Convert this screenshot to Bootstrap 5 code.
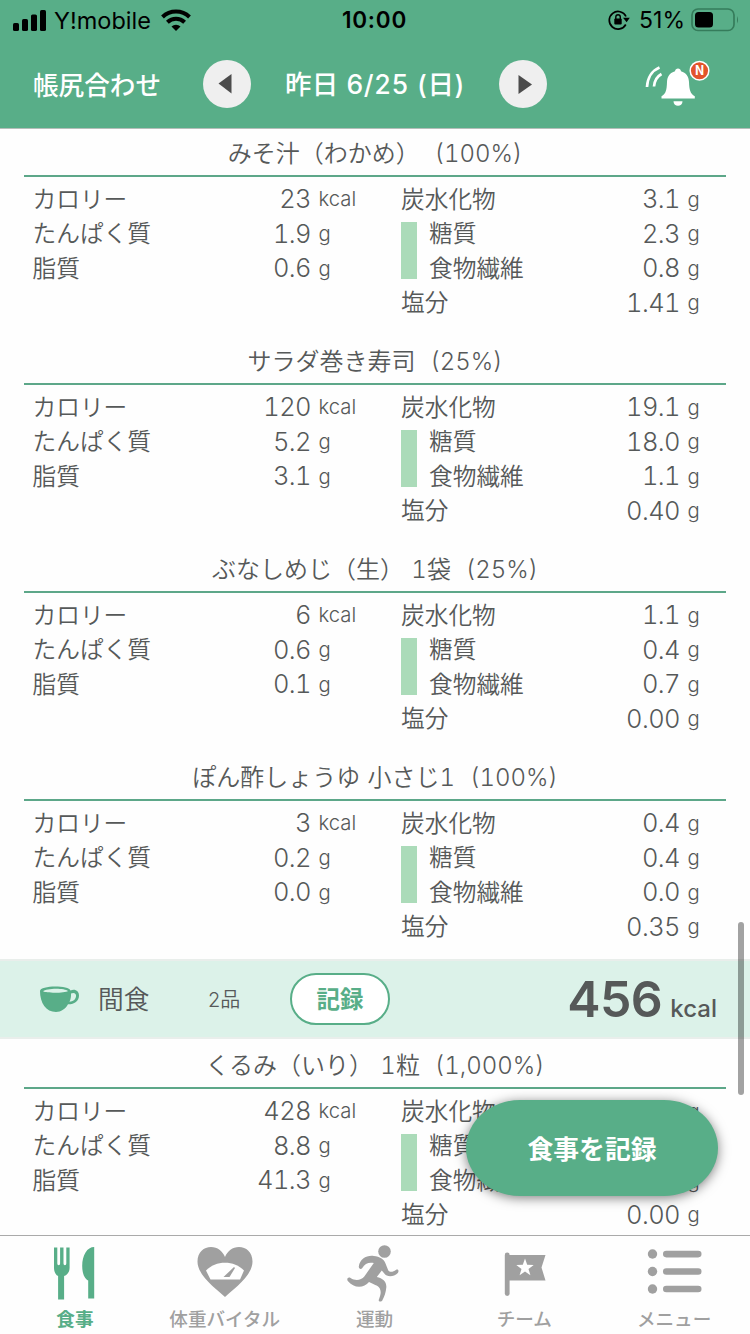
<!DOCTYPE html>
<html lang="ja">
<head>
<meta charset="utf-8">
<meta name="viewport" content="width=device-width, initial-scale=1">
<title>食事</title>
<link rel="stylesheet" href="https://cdn.jsdelivr.net/npm/bootstrap@5.3.0/dist/css/bootstrap.min.css">
<style>
:root { --app-green:#58ae88; --app-ink:#565959; --app-gray:#a0a0a0; }
html, body { height:100%; overflow:hidden; }
body { font-family:Inter,"Noto Sans CJK JP",sans-serif; color:var(--app-ink); background:#fefefe; line-height:1; }
svg { display:block; flex:none; }
.phone { width:750px; height:1334px; }
.app-head { background:var(--app-green); height:129px; border-bottom:1px solid #b4beb9; }
.status { height:40px; color:#000; font-size:23px; padding:0 11px 0 13px; }
.status .side { flex:1 1 0; }
.carrier { margin-left:7px; margin-right:10px; font-size:23.5px; padding-top:1px; }
.pct { margin:0 6px 0 9px; padding-top:1px; }
.clock { font-weight:600; font-size:22.5px; letter-spacing:.75px; padding-top:1px; margin-left:-3px; }
.head-row { height:88px; padding-left:33px; color:#fff; font-weight:500; font-size:25.6px; font-family:"Noto Sans CJK JP",sans-serif; }
.round-btn { width:48px; height:48px; background:#efefef; border:0; }
.head-title { width:170px; }
.head-date { width:248px; font-family:Inter,"Noto Sans CJK JP",sans-serif; font-size:26.5px; letter-spacing:.4px; font-feature-settings:"tnum"; padding-top:1px; }
.bell { margin-left:98px; }
.scroller { flex:1 1 0; min-height:0; }
.food { height:208px; padding:0 24px; font-size:23.7px; font-weight:350; font-feature-settings:"tnum"; }
.food h2 { height:48px; font-size:24px; font-weight:350; line-height:50px; word-spacing:1px; border-bottom:2px solid #5da789; margin:0 0 5px; white-space:pre; }
.nutri { height:34.5px; }
.nutri-label { padding-top:1px; }
.left-col { width:377px; padding-left:8.5px; }
.right-col { width:325px; position:relative; }
.val { font-size:25.5px; font-weight:300; padding-bottom:1px; letter-spacing:-.6px; }
.unit { font-size:20.3px; padding-left:7.5px; font-weight:300; }
.unit-g { padding-top:1px; }
.left-col .unit { width:90px; }
.right-col .unit { width:46px; }
.sub { padding-left:28px; }
.sugar-bar { position:absolute; left:0; top:40px; width:16px; height:57px; background:#abdbb9; }
.meal { height:80px; margin:-2px 0 2px; background:#dcf2e9; border-top:2px solid #e9eeeb; border-bottom:2px solid #e9eeeb; padding:0 33px 0 40px; }
.meal-name { font-size:25.7px; font-weight:350; width:110px; margin-left:18px; padding-top:1px; }
.meal-count { font-size:20px; font-weight:350; width:82px; padding-top:1px; }
.rec-btn { width:100px; height:52px; border:2px solid var(--app-green); background:#fff; color:var(--app-green); font-size:23.5px; font-weight:700; border-radius:27px; padding:2px 0 0; }
.total { font-size:50px; font-weight:600; letter-spacing:-.5px; }
.total-unit { font-size:24px; font-weight:500; }
.fab { position:absolute; left:466px; top:1100px; width:252px; height:96px; border-radius:54px/48px; border:0; background:var(--app-green); color:#fff; font-size:25.8px; font-weight:700; box-shadow:0 2px 12px rgba(0,0,0,.5); padding-top:4px; }
.thumb { position:absolute; left:738px; top:922px; width:6px; height:173px; border-radius:3px; background:rgba(0,0,0,.36); }
.tabs { height:99px; background:#fefefe; border-top:1px solid #aaa; position:relative; }
.tab-item { width:149.8px; color:var(--app-gray); font-size:18.6px; font-weight:500; text-decoration:none; padding-top:8px; white-space:nowrap; }
.tab-item.active { color:var(--app-green); font-weight:700; }
.tab-item span { margin-top:5px; line-height:22px; font-family:"Noto Sans CJK JP",sans-serif; }
</style>
</head>
<body>
<div class="phone d-flex flex-column position-relative overflow-hidden">
  <header class="app-head">
    <div class="status d-flex align-items-center">
      <div class="side d-flex align-items-center">
        <svg width="34" height="21" viewBox="0 0 34 21"><rect y="13" width="6" height="8" rx="1.6"/><rect x="9" y="9" width="6" height="12" rx="1.6"/><rect x="18" y="4.500" width="6" height="16.500" rx="1.600"/><rect x="27" width="6" height="21" rx="1.600"/></svg>
        <span class="carrier">Y!mobile</span>
        <svg width="30" height="22" viewBox="0 0 30 22"><path d="M15 22l-4.500-4.500a6.500 6.500 0 0 1 9 0z"/><path d="M1.500 8a19.500 19.500 0 0 1 27 0M6.400 13.200a12.400 12.400 0 0 1 17.200 0" fill="none" stroke="#000" stroke-width="4"/></svg>
      </div>
      <div class="clock">10:00</div>
      <div class="side d-flex align-items-center justify-content-end">
        <svg width="22" height="22" viewBox="0 0 22 22"><path d="M17.800 15.500A8.800 8.800 0 1 1 18 7.500" fill="none" stroke="#000" stroke-width="1.700"/><path d="M15 8.800h6.800l-3.200 4.500z"/><rect x="6.300" y="9.500" width="7.400" height="6" rx="1"/><path d="M7.800 10V8a2.250 2.250 0 0 1 4.500 0v2" fill="none" stroke="#000" stroke-width="1.400"/></svg>
        <span class="pct">51%</span>
        <svg width="48" height="24" viewBox="0 0 48 24"><rect x="1" y="1" width="42" height="21.500" rx="6" fill="none" stroke="#357c5b" stroke-width="1.700"/><rect x="4" y="4" width="18" height="15.500" rx="3.500"/><path d="M46 8q2 3.800 0 7.500z" fill="#357c5b"/></svg>
      </div>
    </div>
    <div class="head-row d-flex align-items-center">
      <div class="head-title">帳尻合わせ</div>
      <button class="round-btn rounded-circle d-flex align-items-center justify-content-center p-0"><svg width="20" height="20" viewBox="0 0 20 20"><path d="M1.500 9.500L14.500 0v19.500z" fill="#4c4c4c"/></svg></button>
      <div class="head-date text-center">昨日 6/25 (日)</div>
      <button class="round-btn rounded-circle d-flex align-items-center justify-content-center p-0"><svg width="20" height="20" viewBox="0 0 20 20"><path d="M19 10.500L5.500 1v19z" fill="#4c4c4c"/></svg></button>
      <svg class="bell" width="66" height="48" viewBox="0 0 66 48"><path d="M33 8.500c1.600 0 2.700 1 3 2.800 5 1.400 7.700 5 8 10.700.3 8 1.200 11.500 5.800 14.200V38.500H16.500v-2.300c4.600-2.700 5.200-6.200 5.500-14.200.3-5.700 3-9.300 8-10.700.3-1.800 1.400-2.800 3-2.800z" fill="#fff"/><path d="M28.500 41.300h9c0 6-9 6-9 0z" fill="#fff"/><path d="M2 27C2.500 18 7 10.500 14.500 7.500M9 26.500C9.500 20.500 12 16.500 16.500 14" fill="none" stroke="#fff" stroke-width="2.700"/><circle cx="54.500" cy="10.700" r="9.300" fill="#e2542b" stroke="#fff" stroke-width="1.500"/><text x="54.500" y="15.300" font-size="13" font-weight="700" fill="#fff" text-anchor="middle" font-family="Noto Sans CJK JP">N</text></svg>
    </div>
  </header>

  <main class="scroller overflow-hidden" id="list"></main>

  <nav class="tabs d-flex">
    <a class="tab-item active d-flex flex-column align-items-center" href="#"><svg width="56" height="58" viewBox="0 0 56 58" fill="currentColor"><path d="M8 3.500h3.300v16q0 1.700 1.400 1.700t1.400-1.700v-16h3.400v16q0 1.700 1.400 1.700t1.400-1.700v-16h3.300v20.500c0 4-2.300 7-5.500 8v23.500h-6V32C9.800 31 8 28 8 24z" transform="translate(-1 0)"/><path d="M47.200 3v51.500h-6V36.500c-3.500-1.500-6-7-6-14.500 0-11 5-19 12-19z"/></svg><span>食事</span></a>
    <a class="tab-item d-flex flex-column align-items-center" href="#"><svg width="56" height="58" viewBox="0 0 56 58"><path d="M28 53C21 46 .5 32.500.5 17.500.5 8 7 3 14 3c6.500 0 11.500 4 14 10C30.500 7 35.500 3 42 3c7 0 13.500 5 13.500 14.500C55.500 32.500 35 46 28 53z" fill="#a0a0a0"/><path d="M9 26.500C18.500 16 37.500 16 47 26.500l-4 9H13.500z" fill="#fff"/><path d="M37 23l1 1-5.500 9h-6z" fill="#a0a0a0"/></svg><span>体重バイタル</span></a>
    <a class="tab-item d-flex flex-column align-items-center" href="#"><svg width="56" height="58" viewBox="-0.8 0 56 58" fill="#a0a0a0"><circle cx="37.700" cy="7.500" r="6.300"/><path d="M12 22.500C13 15 20 11 27 12c6 .8 10 3 11.500 7l3 7.500c1.500 2 5 1.500 7.500-.5 2.500-1.500 3.500 1 2 3-4.500 4.500-11 4-13.500.5l-2.500-3-5 6.500c6 1.500 10 4.500 9.500 10.500-.4 5-2 9-4 13-.8 1.700-4.300 1.500-3.500-.8 2-5 2.500-8 1-11.200-2-3.500-6.500-4-10.800-6.500C17 44.500 7 44.500 1 37c-1.500-2.300.5-4.500 2.800-3 5.200 3.500 10.700 2 13.700-1.500L27 19c-5-1-9 .5-11.500 5-1.500 2-3.800.5-3.500-1.500z"/></svg><span>運動</span></a>
    <a class="tab-item d-flex flex-column align-items-center" href="#"><svg width="56" height="58" viewBox="0 0 56 58"><rect x="8.800" y="8.500" width="4.800" height="43.500" rx="2.400" fill="#a0a0a0"/><path d="M11 11h38.500L45.500 23.500l4 13H11z" fill="#a0a0a0"/><path d="M29 14.500l2.200 6.200 6.500.2-5.200 4 1.900 6.300-5.400-3.700-5.400 3.700 1.900-6.300-5.200-4 6.500-.2z" fill="#fff"/></svg><span>チーム</span></a>
    <a class="tab-item d-flex flex-column align-items-center" href="#"><svg width="56" height="58" viewBox="0 0 56 58" fill="#a0a0a0"><circle cx="6.500" cy="10" r="4.700"/><circle cx="6.500" cy="27.500" r="4.700"/><circle cx="6.500" cy="45" r="4.700"/><rect x="17" y="6.800" width="38.500" height="6.600" rx="3.300"/><rect x="17" y="24.200" width="38.500" height="6.600" rx="3.300"/><rect x="17" y="41.700" width="38.500" height="6.600" rx="3.300"/></svg><span>メニュー</span></a>
  </nav>

  <button class="fab">食事を記録</button>
  <div class="thumb"></div>
</div>
<script src="https://cdn.jsdelivr.net/npm/bootstrap@5.3.0/dist/js/bootstrap.bundle.min.js"></script>
<script>
// name, kcal, protein, fat, carbohydrate, sugar, fibre, salt
const foods = [
  ['みそ汁（わかめ）  (100%)', '23', '1.9', '0.6', '3.1', '2.3', '0.8', '1.41'],
  ['サラダ巻き寿司  (25%)', '120', '5.2', '3.1', '19.1', '18.0', '1.1', '0.40'],
  ['ぶなしめじ（生） 1袋  (25%)', '6', '0.6', '0.1', '1.1', '0.4', '0.7', '0.00'],
  ['ぽん酢しょうゆ 小さじ1  (100%)', '3', '0.2', '0.0', '0.4', '0.4', '0.0', '0.35'],
  ['くるみ（いり） 1粒  (1,000%)', '428', '8.8', '41.3', '', '', '', '0.00']
];
const line = (label, value, unit, cls = '') =>
  `<div class="nutri d-flex align-items-center ${cls}"><span class="nutri-label me-auto">${label}</span><span class="val">${value}</span><span class="unit unit-${unit}">${unit}</span></div>`;
const food = f => `<section class="food"><h2 class="text-center">${f[0]}</h2><div class="d-flex">
  <div class="left-col">${line('カロリー', f[1], 'kcal')}${line('たんぱく質', f[2], 'g')}${line('脂質', f[3], 'g')}</div>
  <div class="right-col"><div class="sugar-bar"></div>${line('炭水化物', f[4], 'g')}${line('糖質', f[5], 'g', 'sub')}${line('食物繊維', f[6], 'g', 'sub')}${line('塩分', f[7], 'g')}</div>
</div></section>`;
const meal = `<div class="meal d-flex align-items-center">
  <svg width="40" height="27" viewBox="0 0 40 27"><path d="M0 5C0-1 29-1 30.500 4.500 35 2.500 39 5 39 9.500c0 5.500-5 9-11 8.800C25.500 23 21 26 16 26 6 26 0 17 0 5z" fill="#58ae88"/><path d="M3 5.300c3-3.200 21.500-3.600 25-.3-3 2.300-22 2.300-25 .3zM31 7.500c3-1.500 5.500 0 5 3-.4 3-3 5-6.500 5.300 1.300-3 1.700-5.500 1.500-8.300z" fill="#dcf2e9"/></svg>
  <span class="meal-name">間食</span><span class="meal-count">2品</span><button class="rec-btn">記録</button>
  <span class="ms-auto d-flex align-items-baseline"><span class="total">456</span><span class="total-unit ms-2">kcal</span></span></div>`;
document.getElementById('list').innerHTML = foods.slice(0, 4).map(food).join('') + meal + food(foods[4]);
</script>
</body>
</html>
